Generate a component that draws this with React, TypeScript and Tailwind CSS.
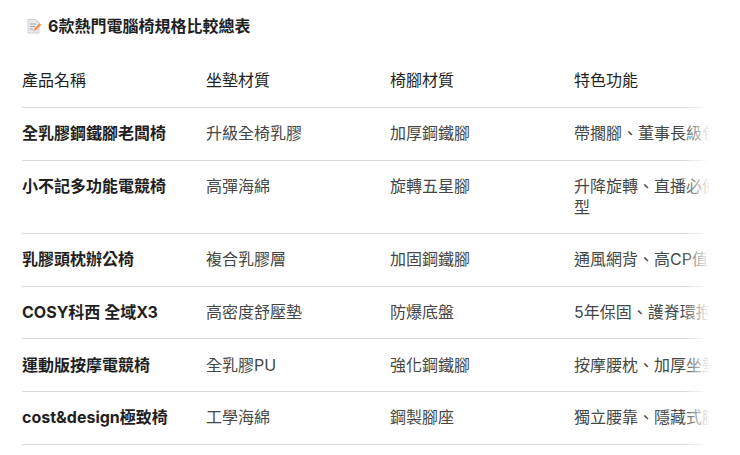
import React from "react";

const rows = [
  ["全乳膠鋼鐵腳老闆椅", "升級全椅乳膠", "加厚鋼鐵腳", "帶擱腳、董事長級包"],
  ["小不記多功能電競椅", "高彈海綿", "旋轉五星腳", "升降旋轉、直播必備型"],
  ["乳膠頭枕辦公椅", "複合乳膠層", "加固鋼鐵腳", "通風網背、高CP值"],
  ["COSY科西 全域X3", "高密度舒壓墊", "防爆底盤", "5年保固、護脊環抱"],
  ["運動版按摩電競椅", "全乳膠PU", "強化鋼鐵腳", "按摩腰枕、加厚坐墊"],
  ["cost&design極致椅", "工學海綿", "鋼製腳座", "獨立腰靠、隱藏式腳"],
];

const headers = ["產品名稱", "坐墊材質", "椅腳材質", "特色功能"];

const MemoIcon = () => (
  <svg width="16" height="16" viewBox="0 0 16 16">
    <path d="M2 1.5h8l3 3V15H2z" fill="#e8eaed" stroke="#c4c7cc" strokeWidth="0.8" />
    <path d="M10 1.5v3h3" fill="#d2d5da" />
    <path d="M4 6h6M4 8.5h5M4 11h3" stroke="#9aa0a6" strokeWidth="0.9" />
    <path d="M7 13.5l1-2.6 5.6-5.6 1.6 1.6-5.6 5.6z" fill="#f28b50" />
    <path d="M7 13.5l1-2.6 1.6 1.6z" fill="#f6c9a8" />
  </svg>
);

export default function App() {
  return (
    <div
      className="min-h-[455px] bg-white px-[22px] pt-[16px] text-[#1f1f1f]"
      style={{ fontFamily: 'Inter, "Noto Sans CJK TC", "Noto Sans", sans-serif' }}
    >
      <div className="flex h-[20px] items-center gap-[6px] pl-[4px]">
        <MemoIcon />
        <h2 className="text-[16px] font-bold leading-[20px]">6款熱門電腦椅規格比較總表</h2>
      </div>

      <div className="relative mt-[18px] w-[688px] overflow-hidden">
        <table className="w-[736px] table-fixed text-[16px] leading-[21px]">
          <colgroup>
            <col className="w-[184px]" />
            <col className="w-[184px]" />
            <col className="w-[184px]" />
            <col className="w-[184px]" />
          </colgroup>
          <thead>
            <tr className="border-b border-[#d9d9d9]">
              {headers.map((h) => (
                <th key={h} className="py-[16px] pr-[32px] text-left font-normal text-[#1f1f1f]">
                  {h}
                </th>
              ))}
            </tr>
          </thead>
          <tbody>
            {rows.map((r) => (
              <tr key={r[0]} className="border-b border-[#d9d9d9]">
                <td className="py-[15.3px] pr-[8px] align-top font-bold text-[#1f1f1f]">{r[0]}</td>
                <td className="py-[15.3px] pr-[32px] align-top text-[#444746]">{r[1]}</td>
                <td className="py-[15.3px] pr-[32px] align-top text-[#444746]">{r[2]}</td>
                <td className="py-[15.3px] pr-[32px] align-top text-[#444746]">{r[3]}</td>
              </tr>
            ))}
          </tbody>
        </table>
        {/* right edge fade */}
        <div className="pointer-events-none absolute bottom-0 right-0 top-0 w-[28px] bg-linear-to-r from-white/0 to-white" />
      </div>
    </div>
  );
}
